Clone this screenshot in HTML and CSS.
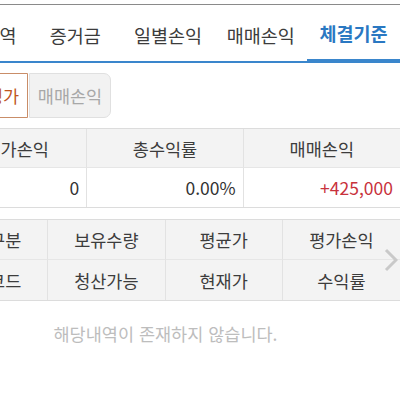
FILE: index.html
```html
<!DOCTYPE html>
<html lang="ko">
<head>
<meta charset="utf-8">
<link rel="stylesheet" href="styles.css">
</head>
<body>
<div class="page">
  <nav class="tabs">
    <div class="tab">체결내역</div>
    <div class="tab">증거금</div>
    <div class="tab">일별손익</div>
    <div class="tab">매매손익</div>
    <div class="tab active">체결기준</div>
  </nav>
  <div class="content">
    <div class="seg">
      <div class="seg-btn on">잔고평가</div>
      <div class="seg-btn off">매매손익</div>
    </div>
    <div class="sum">
      <div class="cell head">총평가손익</div>
      <div class="cell head">총수익률</div>
      <div class="cell head">매매손익</div>
      <div class="cell num">0</div>
      <div class="cell num">0.00%</div>
      <div class="cell num red">+425,000</div>
    </div>
    <div class="grid-wrap">
      <div class="grid">
        <div class="cell head">종목구분</div>
        <div class="cell head">보유수량</div>
        <div class="cell head">평균가</div>
        <div class="cell head">평가손익</div>
        <div class="cell head">종목코드</div>
        <div class="cell head">청산가능</div>
        <div class="cell head">현재가</div>
        <div class="cell head">수익률</div>
      </div>
      <svg class="chev" width="14" height="24" viewBox="0 0 14 24"><path d="M2 2 L12 12 L2 22" fill="none" stroke="#c9c9c9" stroke-width="3"/></svg>
    </div>
    <p class="empty">해당내역이 존재하지 않습니다.</p>
  </div>
</div>
</body>
</html>
```
FILE: styles.css
```css
html, body {
  margin: 0;
  padding: 0;
  background: #fff;
  overflow: hidden;
}
body {
  font-family: "Noto Sans CJK KR", "Noto Sans", sans-serif;
  padding-top: 4px;
}
.page {
  border-top: 1px solid #8a8a8a;
}
.tabs {
  display: flex;
  align-items: flex-start;
  margin-left: -64px;
  width: 464px;
  height: 56px;
  border-bottom: 2px solid #3a86cc;
}
.tab {
  flex: 1;
  height: 56px;
  display: flex;
  align-items: center;
  justify-content: center;
  font-size: 18.5px;
  color: #3c3c3c;
  padding-top: 4px;
  box-sizing: border-box;
}
.tab.active {
  color: #2a78c2;
  font-weight: bold;
  height: 58px;
  border-bottom: 4px solid #3a86cc;
  padding-top: 2px;
}
.content {
  margin-left: -69px;
  width: 469px;
}
.seg {
  display: flex;
  margin-top: 10px;
  margin-left: 15px;
}
.seg-btn {
  width: 82px;
  height: 45px;
  box-sizing: border-box;
  display: flex;
  align-items: center;
  justify-content: center;
  font-size: 17.5px;
}
.seg-btn.on {
  border: 1px solid #c98d68;
  color: #c0561e;
  border-radius: 6px 0 0 6px;
}
.seg-btn.off {
  margin-left: 1px;
  background: #f2f2f2;
  border: 1px solid #e0e0e0;
  border-radius: 0 7px 7px 0;
  color: #a8a8a8;
}
.sum {
  margin-top: 10px;
  display: grid;
  grid-template-columns: repeat(3, 1fr);
  border-top: 1px solid #dcdcdc;
  border-bottom: 1px solid #dcdcdc;
}
.cell {
  height: 39px;
  display: flex;
  align-items: center;
  justify-content: center;
  font-size: 17.5px;
  color: #3c3c3c;
  box-sizing: border-box;
  border-right: 1px solid #e2e2e2;
}
.cell:nth-child(3n) {
  border-right: none;
}
.sum .head {
  background: #f3f3f3;
  border-bottom: 1px solid #e6e6e6;
}
.num {
  justify-content: flex-end;
  padding-right: 7px;
  color: #333;
}
.red {
  color: #c8323c;
}
.grid-wrap {
  position: relative;
  margin-top: 11px;
}
.grid {
  display: grid;
  grid-template-columns: repeat(4, 1fr);
  border-top: 1px solid #dcdcdc;
  border-bottom: 1px solid #dcdcdc;
  background: #f3f3f3;
}
.grid .cell {
  height: 40px;
  border-right: 1px solid #e2e2e2;
}
.grid .cell:nth-child(3n) {
  border-right: 1px solid #e2e2e2;
}
.grid .cell:nth-child(4n) {
  border-right: none;
}
.grid .cell:nth-child(-n+4) {
  border-bottom: 1px solid #e6e6e6;
}
.chev {
  position: absolute;
  right: 2px;
  top: 29px;
}
.empty {
  margin: 20px 0 0;
  text-align: center;
  font-size: 17.5px;
  color: #bdbdbd;
}
```
